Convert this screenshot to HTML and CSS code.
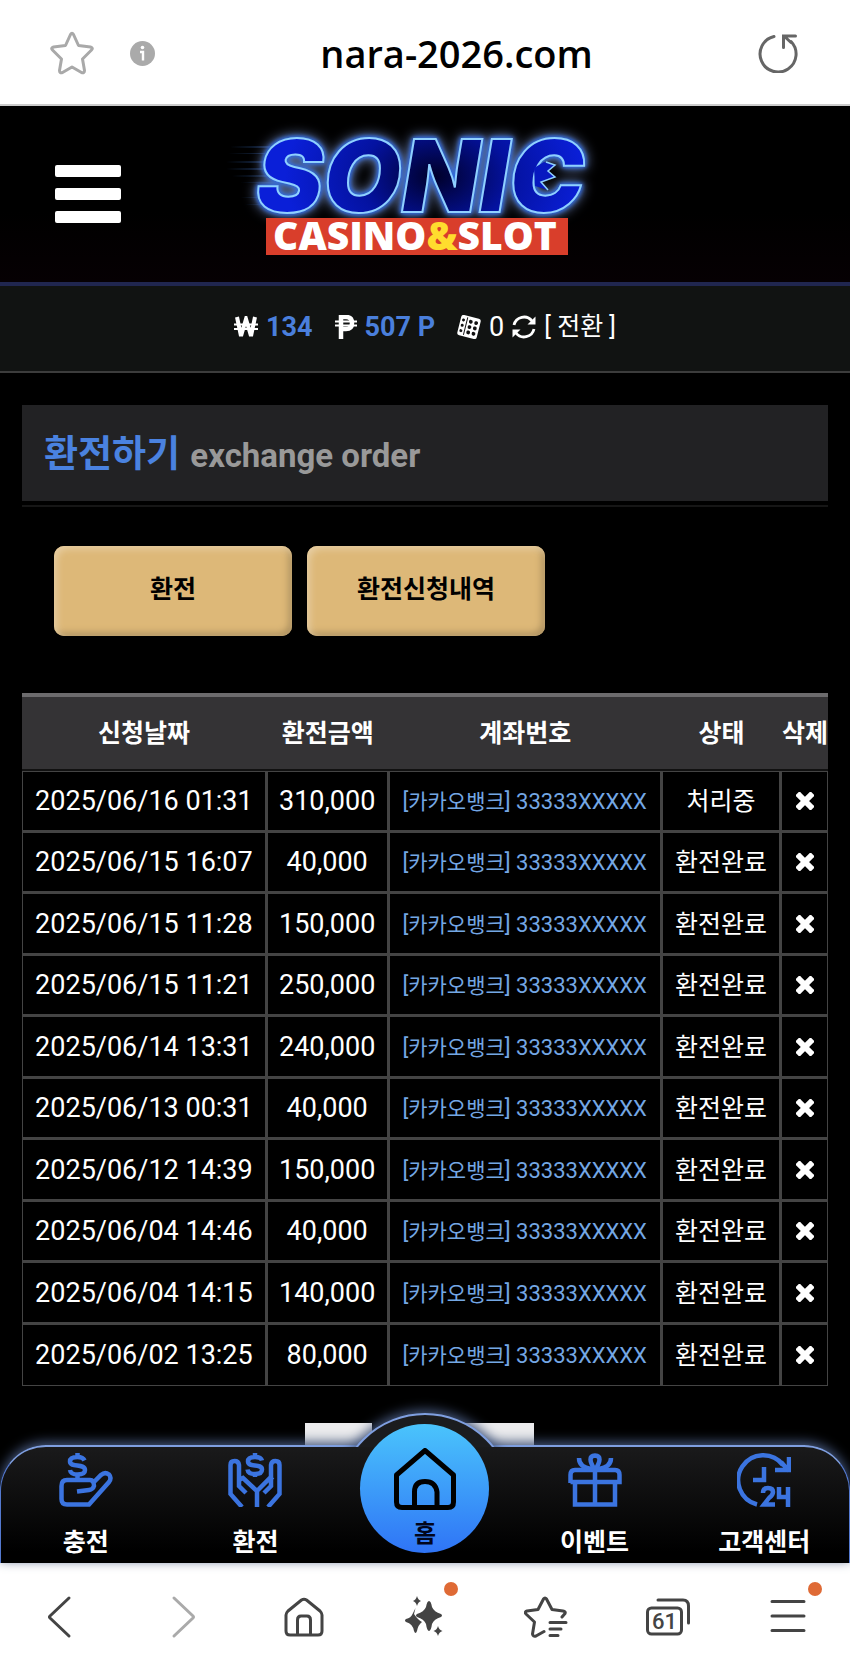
FILE: index.html
```html
<!DOCTYPE html>
<html lang="ko">
<head>
  <meta charset="UTF-8"/>
  <meta name="viewport" content="width=device-width, initial-scale=1.0"/>
  <title>nara-2026.com</title>
  <link rel="stylesheet" href="styles.css">
</head>
<body>
  <!-- address bar -->
  <div class="address-bar">
    <button class="icon-btn" aria-label="Bookmark">
      <svg width="44" height="44" viewBox="0 0 44 44" fill="none" stroke="#a9a9a9" stroke-width="3" stroke-linejoin="round"><path d="M20.5 3.5Q22 1 23.500 3.500L28.500 14.500L40.500 16Q43.500 17 41.500 19L32.500 28L34.500 39.500Q34.500 42.500 31.500 41.500L22 36L12.500 41.500Q9.500 42.500 9.500 39.500L11.500 28L2.500 19Q.5 17 3.500 16L15.500 14.500Z"/></svg>
    </button>
    <button class="icon-btn info" aria-label="Site information">
      <svg width="25" height="25" viewBox="0 0 25 25"><circle cx="12.500" cy="12.500" r="12.500" fill="#aaa"/><circle cx="12.500" cy="6.500" r="1.800" fill="#fff"/><path d="M10 11h3v8.500" fill="none" stroke="#fff" stroke-width="2.400"/></svg>
    </button>
    <span class="address">nara-2026.com</span>
    <button class="icon-btn" aria-label="Reload">
      <svg width="40" height="40" viewBox="0 0 40 40" fill="none" stroke="#666" stroke-width="3" stroke-linecap="round"><path d="M16 3.500A18 18 0 1 0 33 8.500"/><path d="M25.500 14.500V3H37.500M26 3L33 9.500"/></svg>
    </button>
  </div>

  <header class="site-header">
    <button class="menu-btn" aria-label="메뉴"><span></span><span></span><span></span></button>
    <a class="logo" href="#" aria-label="SONIC CASINO&amp;SLOT">
      <svg viewBox="0 0 430 176">
        <defs>
          <linearGradient id="speed" x1="0" x2="1"><stop offset="0" stop-color="#36a" stop-opacity="0"/><stop offset="1" stop-color="#4a7be0"/></linearGradient>
          <radialGradient id="letters" gradientUnits="userSpaceOnUse" cx="225" cy="72" r="150" gradientTransform="translate(0 20) scale(1 .7)"><stop offset="0" stop-color="#00002a"/><stop offset=".5" stop-color="#0412a0"/><stop offset="1" stop-color="#0a1fd8"/></radialGradient>
        </defs>
        <g fill="url(#speed)" opacity=".6">
          <rect x="20" y="40" width="60" height="2"/><rect x="18" y="47" width="60" height="1"/><rect x="16" y="55" width="60" height="2"/><rect x="16" y="62" width="60" height="2"/><rect x="22" y="69" width="60" height="2"/><rect x="30" y="76" width="50" height="1"/><rect x="30" y="91" width="40" height="1"/><rect x="34" y="98" width="40" height="1"/>
        </g>
        <text class="sonic" x="46" y="106">SONIC</text>
        <!-- quills inside the last letter -->
        <path d="M334 56L345 59L338 65L345 71L331 76L338 84L325 80L324 62Z" fill="#0719c0"/>
        <path d="M336 56L345 59L338 65L345 71L331 76L338 84" fill="none" stroke="#8fd0ff" stroke-width="1.500"/>
        <rect x="56" y="112" width="302" height="37" fill="#d93e2b"/>
        <text class="tagline" x="205" y="144" text-anchor="middle">CASINO<tspan fill="#ffdc2e">&amp;</tspan>SLOT</text>
      </svg>
    </a>
  </header>

  <div class="wallet">
    <span class="amount">
      <svg width="24" height="22" viewBox="0 0 24 22" fill="none" stroke="#fff"><path d="M3 1L7 20L12 3L17 20L21 1" stroke-width="4"/><path d="M0 8.500H24M0 13H24" stroke-width="2"/></svg>
      <b>134</b>
    </span>
    <span class="amount">
      <svg width="22" height="24" viewBox="0 0 22 24" fill="none" stroke="#fff"><path d="M6 24V2H11Q17 2 17 8T11 14H6" stroke-width="4.500"/><path d="M0 6.500H22M0 10.500H22" stroke-width="1.800"/></svg>
      <b>507 P</b>
    </span>
    <span class="amount">
      <svg width="24" height="24" viewBox="0 0 24 24"><g transform="rotate(14 12 12)"><rect x="2" y="1.500" width="20" height="21" rx="2.500" fill="#fff"/><path d="M8.500 3V21" stroke="#111" stroke-width="1"/><g fill="#111"><circle cx="5" cy="6.500" r="1.500"/><circle cx="5" cy="12" r="1.500"/><circle cx="5" cy="17.500" r="1.500"/><circle cx="12.500" cy="6.500" r="1.900"/><circle cx="18" cy="6.500" r="1.900"/><circle cx="12.500" cy="12" r="1.900"/><circle cx="18" cy="12" r="1.900"/><circle cx="12.500" cy="17.500" r="1.900"/><circle cx="18" cy="17.500" r="1.900"/></g></g></svg>
      <span>0</span>
      <button class="convert">
        <svg width="24" height="24" viewBox="0 0 24 24" fill="none" stroke="#fff" stroke-width="2.800"><path d="M2 10A10.200 10.200 0 0 1 20 6M22 14A10.200 10.200 0 0 1 4 18"/><path d="M23.500 1.500V9.500H15.500ZM.5 22.500V14.500H8.500Z" fill="#fff" stroke="none"/></svg>
        [ 전환 ]
      </button>
    </span>
  </div>

  <main>
    <h1><span>환전하기</span> exchange order</h1>
    <div class="tabs">
      <button>환전</button>
      <button>환전신청내역</button>
    </div>

    <table>
      <colgroup><col class="c-date"><col class="c-amount"><col class="c-account"><col class="c-state"><col class="c-del"></colgroup>
      <thead>
        <tr><th>신청날짜</th><th>환전금액</th><th>계좌번호</th><th>상태</th><th>삭제</th></tr>
      </thead>
      <tbody id="orders"></tbody>
    </table>

    <div class="pager"><span></span><span></span></div>
  </main>

  <nav class="dock">
    <div class="bump"></div>
    <a href="#">
      <svg width="54" height="54" viewBox="0 0 54 54" fill="none" stroke="#3b74e0" stroke-width="4.500"><path d="M25.500 7.500C24 4 21 4 18.500 4C14 4 11 5.500 11 8.500C11 15 26 10 26 17C26 20 23 21.500 18.500 21.500C14 21.500 11.500 20 11 17M18.500 0V4M18.500 21V26"/><path d="M18 38.500L30 37Q34 36.500 35 33Q35 27 31 27H8Q2.500 27 2.500 33V46Q2.500 51.500 8 51.500H30L50 29Q53 25 50 21.500Q46 18.500 42 22L33 31"/></svg>
      <span>충전</span>
    </a>
    <a href="#">
      <svg width="54" height="54" viewBox="0 0 54 54" fill="none" stroke="#3b74e0" stroke-width="4.500"><path d="M34 7.500C33 4 30 4 27 4C23 4 20 5.500 20 8.500C20 15 34 10 34 16.500C34 20 31 21 27 21C23 21 20 20 19.500 16.500M27 0V4M27 21V24"/><path d="M14 54L2.500 41V12Q2.500 8 6.500 8T11 12V33L18 40M11 27L15 25L29 38V54M29 38L42 25L45 27M40 54L51.500 41V12Q51.500 8 47.500 8T43 12V33L36 40"/></svg>
      <span>환전</span>
    </a>
    <a class="home" href="#">
      <svg width="62" height="62" viewBox="0 0 62 62" fill="none" stroke="#000" stroke-width="5" stroke-linejoin="round"><path d="M31 2.500L59.500 27V54Q59.500 59.500 54 59.500H8Q2.500 59.500 2.500 54V27ZM20.500 59V44Q20.500 33.500 31 33.500T43 44V59"/></svg>
      <span>홈</span>
    </a>
    <a href="#">
      <svg width="54" height="54" viewBox="0 0 54 54" fill="none" stroke="#3b74e0" stroke-width="4.500"><path d="M7 30V51.500H47V30M27 17V52M2.500 30V22Q2.500 17 7 17H47Q51.500 17 51.500 22V29H2.500"/><path d="M27 17Q18 3 27 2.500Q36 3 27 17M23 16Q11 14 11 5M31 16Q43 14 43 5"/></svg>
      <span>이벤트</span>
    </a>
    <a href="#">
      <svg width="54" height="54" viewBox="0 0 54 54" fill="none" stroke="#3b74e0" stroke-width="4.500"><path d="M20 51.500A25 25 0 1 1 46 12"/><path d="M52 4V17H38M52 18L44 9M27 14V27H16"/><path d="M26 40Q26 35 31 35Q36 35 36 39Q36 42 32 45L27 51.500H38M42 34V44H52M51 34V54"/></svg>
      <span>고객센터</span>
    </a>
  </nav>

  <!-- browser toolbar -->
  <div class="toolbar">
    <button aria-label="Back"><svg width="44" height="44" viewBox="0 0 44 44"><path d="M30 3L11 21Q10 22 11 23L30 41"/></svg></button>
    <button class="off" aria-label="Forward"><svg width="44" height="44" viewBox="0 0 44 44"><path d="M14 3L33 21Q34 22 33 23L14 41"/></svg></button>
    <button aria-label="Home"><svg width="44" height="44" viewBox="0 0 44 44"><path d="M19.500 5Q22 3.500 24.500 5L38 16Q40 18 40 20V36Q40 40 36 40H8Q4 40 4 36V20Q4 18 6 16ZM15.500 40V25Q15.500 21 19 21H25Q28.500 21 28.500 25V40"/></svg></button>
    <button aria-label="Assistant"><svg width="44" height="44" viewBox="0 0 44 44"><g fill="#444" stroke="none"><path d="M26 6Q28 6 29 12Q31 17 38 19Q40 20.500 38 22Q31 24 29 29Q28 36 26 36Q24 36 23 29Q21 24 14 22Q12 20.500 14 19Q21 17 23 12Q24 6 26 6ZM12.500 13L11 19Q15 25 19 27Q15 30 14 36Q12.500 40 11 36Q10 29 3 27Q1 25.500 3 24Q8 23 9.500 19Z"/><path d="M14 1Q15 5 18 6Q15 7 14 11Q13 7 10 6Q13 5 14 1ZM35 31Q36 35 39.500 36Q36 37 35 41Q34 37 30.500 36Q34 35 35 31Z"/></g></svg><i class="dot"></i></button>
    <button aria-label="Bookmarks"><svg width="44" height="44" viewBox="0 0 44 44"><path d="M38 22L41 18.500Q42 16.500 39 16L28 14.500L22.500 4Q21 2 19.500 4L14 14.500L3 16Q0 17 2 19L10.500 27L8.500 39Q9 42 12 41L20 36.500M26 27.500H42M26 34H37M26 40.500H34"/></svg></button>
    <button aria-label="Tabs"><svg width="44" height="44" viewBox="0 0 44 44"><rect x="1.500" y="13" width="34" height="26" rx="4"/><path d="M12 5H37Q42.500 5 42.500 11V28"/><text x="18.500" y="34" text-anchor="middle">61</text></svg></button>
    <button aria-label="More"><svg width="44" height="44" viewBox="0 0 44 44"><path d="M5 6.500H37M5 21H37M5 35.500H37"/></svg><i class="dot"></i></button>
  </div>

  <script>
    const orders = [
      ['2025/06/16 01:31', '310,000', '처리중'],
      ['2025/06/15 16:07', '40,000', '환전완료'],
      ['2025/06/15 11:28', '150,000', '환전완료'],
      ['2025/06/15 11:21', '250,000', '환전완료'],
      ['2025/06/14 13:31', '240,000', '환전완료'],
      ['2025/06/13 00:31', '40,000', '환전완료'],
      ['2025/06/12 14:39', '150,000', '환전완료'],
      ['2025/06/04 14:46', '40,000', '환전완료'],
      ['2025/06/04 14:15', '140,000', '환전완료'],
      ['2025/06/02 13:25', '80,000', '환전완료']
    ];
    document.getElementById('orders').innerHTML = orders.map(([date, amount, state]) => `
      <tr>
        <td>${date}</td>
        <td>${amount}</td>
        <td class="account">[<span>카카오뱅크</span>] 33333XXXXX</td>
        <td class="state">${state}</td>
        <td><button class="delete" aria-label="삭제"><svg width="18" height="18" viewBox="0 0 18 18"><path d="M3.500 3.500L14.500 14.500M14.500 3.500L3.500 14.500" stroke="#fff" stroke-width="6" stroke-linecap="square"/></svg></button></td>
      </tr>`).join('');
  </script>
</body>
</html>
```
FILE: styles.css
```css
* { box-sizing: border-box; }
body { margin: 0; background: #000; color: #fff; font-family: Roboto, "Noto Sans CJK KR", sans-serif; font-size: 27px; }
button { padding: 0; border: none; background: none; color: inherit; font: inherit; cursor: pointer; }
a { color: inherit; text-decoration: none; }
svg { display: block; flex: none; }

/* address bar */
.address-bar { display: flex; align-items: center; height: 106px; padding: 2px 52px 0 50px; background: #fff; border-bottom: 2px solid #ccc; }
.info { margin-left: 36px; }
.address { flex: 1; text-align: center; color: #000; font-family: "Open Sans", sans-serif; font-weight: 600; font-size: 38px; line-height: 48px; }

/* header */
.site-header { display: grid; grid-template-columns: 1fr 430px 1fr; align-items: center; height: 180px; border-bottom: 4px solid #20264f; background: linear-gradient(#000 60%, #060003); }
.menu-btn { display: flex; flex-direction: column; gap: 11px; width: 66px; margin-left: 55px; }
.menu-btn span { height: 12px; border-radius: 2px; background: #fff; }
.logo { grid-column: 2; }
.sonic { font-family: Inter, sans-serif; font-weight: 900; font-style: italic; font-size: 101px; fill: url(#letters); stroke: #8fd0ff; stroke-width: 2px; filter: drop-shadow(0 0 2px #2f68dc) drop-shadow(0 0 2px #2f68dc) drop-shadow(0 0 6px #6a7fae); }
.tagline { font-family: "Open Sans", sans-serif; font-weight: 800; font-size: 39px; fill: #fff; }

.wallet { display: flex; justify-content: center; align-items: center; gap: 22px; height: 87px; padding-bottom: 4px; background: #111312; border-bottom: 2px solid #3c3c3c; line-height: 32px; }
.amount { display: flex; align-items: center; gap: 8px; }
.amount b { color: #4a7fdc; }
.convert { display: flex; align-items: center; gap: 8px; font-size: 25px; }

/* content */
main { padding: 32px 22px 0; }
h1 { margin: 0; padding: 4px 22px 0; background: #222224; color: #999; font-size: 33px; line-height: 91px; box-shadow: 0 4px #000, 0 6px #161616; }
h1 span { margin-right: 2px; color: #4a82e0; font-size: 37px; }
.tabs { display: flex; gap: 15px; padding: 45px 32px 57px; }
.tabs button { width: 238px; height: 90px; padding-bottom: 8px; border-radius: 10px; background: #ddb878; color: #000; font-weight: bold; font-size: 25px; box-shadow: inset 3px 3px 7px #e8cfa4, inset -3px -3px 7px #a98d5c; }

table { width: 100%; table-layout: fixed; border-collapse: separate; border-spacing: 0; text-align: center; white-space: nowrap; }
.c-date { width: 30.5%; }
.c-amount { width: 15.1%; }
.c-account { width: 33.9%; }
.c-state { width: 14.8%; }
.c-del { width: 5.7%; }
th { height: 78px; padding: 0 2px 4px 0; background: #343335; border-top: 4px solid #6c6b6d; border-bottom: 2px solid #111; font-size: 25px; }
td { height: 62px; padding: 0; border: 0 solid #444; border-width: 0 3px 3px 0; line-height: 32px; }
tr:nth-child(even) td { height: 61px; }
tbody tr:first-child td { border-top-width: 1px; }
tbody tr:last-child td { border-bottom-width: 1px; }
td:first-child { border-left-width: 1px; }
td:last-child { border-right-width: 1px; }
.account { padding-top: 2px; color: #74a7e4; font-size: 22px; }
.account span { font-size: 21px; }
.state { padding-top: 2px; font-size: 25px; }
.delete { display: block; margin: 0 auto; }

.pager { display: flex; justify-content: center; gap: 12px; width: 241px; height: 22px; margin: 37px auto 0; padding-right: 12px; }
.pager span { width: 67px; background: #ececee; }
.pager span:last-child { flex: 1; }

/* bottom menu */
.dock { position: relative; display: grid; grid-template-columns: repeat(5, 1fr); height: 118px; border: 1px solid #5479cf; border-top: 2px solid #7f9fe0; border-bottom: none; border-radius: 46px 46px 0 0; background: linear-gradient(#1a1a1b, #000 90%); box-shadow: 0 -3px 12px #45577c; font-weight: bold; font-size: 25px; line-height: 32px; }
.dock a { display: flex; flex-direction: column; align-items: center; gap: 20px; padding-top: 6px; }
.bump { position: absolute; left: 50%; top: -34px; width: 176px; height: 176px; transform: translateX(-50%); border: 2px solid #7f9fe0; border-radius: 50%; background: #1b1c1e; box-shadow: 0 -3px 12px #45577c; clip-path: inset(-24px -24px 142px); }
.dock .home { position: relative; gap: 8px; width: 129px; height: 129px; margin: -23px auto 0; padding-top: 24px; border-radius: 50%; background: linear-gradient(#4ac4fc, #2f74f6); color: #02061c; font-size: 24px; }

/* browser toolbar */
.toolbar { display: grid; grid-template-columns: repeat(7, 1fr); height: 107px; background: #fff; }
.toolbar button { position: relative; display: flex; justify-content: center; align-items: center; }
.toolbar svg { fill: none; stroke: #444; stroke-width: 3px; stroke-linecap: round; stroke-linejoin: round; }
.toolbar text { fill: #444; stroke: none; font-size: 22px; font-weight: 500; }
.toolbar .off svg { stroke: #aaa; }
.dot { position: absolute; left: 50%; top: 19px; width: 14px; height: 14px; margin-left: 19px; border-radius: 50%; background: #df6a35; }
```
